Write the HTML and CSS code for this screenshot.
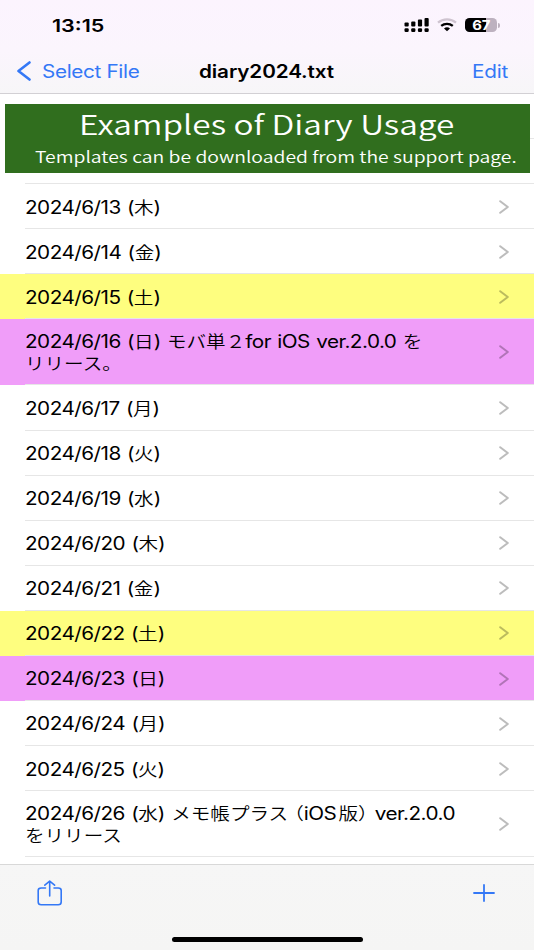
FILE: index.html
```
<!DOCTYPE html>
<html lang="ja">
<head>
    <meta charset="UTF-8">
    <meta name="viewport" content="width=device-width, initial-scale=1.0">
    <title>diary2024.txt</title>
    <link rel="stylesheet" href="styles.css">
</head>
<body>
    <header class="header">
        <div class="status">
            <span class="wide time">13:15</span>
            <div class="status-icons">
                <svg class="signal" width="26" height="16" viewBox="0 0 26 16">
                    <rect x="0.5" y="5.5" width="4.2" height="4" rx="1"/>
                    <rect x="7.2" y="4.5" width="4.2" height="5" rx="1"/>
                    <rect x="13.9" y="2.5" width="4.2" height="7" rx="1"/>
                    <rect x="20.5" y="1" width="4.2" height="8.5" rx="1"/>
                    <rect x="0.5" y="11.3" width="4.2" height="3.6" rx="1.2"/>
                    <rect x="7.2" y="11.3" width="4.2" height="3.6" rx="1.2"/>
                    <rect x="13.9" y="11.3" width="4.2" height="3.6" rx="1.2"/>
                    <rect x="20.5" y="11.3" width="4.2" height="3.6" rx="1.2"/>
                </svg>
                <svg class="wifi" width="20" height="14" viewBox="0 0 20 14" fill="none">
                    <path d="M1 4.6C6 .3 14 .3 19 4.6" stroke="#cfc4d0" stroke-width="2.3"/>
                    <path d="M4.2 7.9C7.5 5.1 12.5 5.1 15.8 7.9" stroke="#000" stroke-width="2.3"/>
                    <path d="M7 10.4C8.7 9 11.3 9 13 10.4L10 13.2Z" fill="#000"/>
                </svg>
                <div class="battery"><span>67</span></div>
                <i class="battery-tip"></i>
            </div>
        </div>
        <nav class="nav">
            <a class="back">
                <svg width="14" height="20" viewBox="0 0 14 20" fill="none" stroke="#3478f6" stroke-width="2.6" stroke-linecap="round" stroke-linejoin="round"><path d="M12.5 1.5L1.5 10L12.5 18.5"/></svg>
                <span class="wide">Select File</span>
            </a>
            <h1 class="wide">diary2024.txt</h1>
            <a class="wide edit">Edit</a>
        </nav>
    </header>

    <main class="list">
        <div class="row"></div>
        <div class="row"></div>
        <div class="row"><p class="wide">2024/6/13 (<b>木</b>)</p><svg class="arrow" viewBox="0 0 10 14"><path d="M1.2 1.2L8.8 7L1.2 12.8"/></svg></div>
        <div class="row"><p class="wide">2024/6/14 (<b>金</b>)</p><svg class="arrow" viewBox="0 0 10 14"><path d="M1.2 1.2L8.8 7L1.2 12.8"/></svg></div>
        <div class="row sat"><p class="wide">2024/6/15 (<b>土</b>)</p><svg class="arrow" viewBox="0 0 10 14"><path d="M1.2 1.2L8.8 7L1.2 12.8"/></svg></div>
        <div class="row sun double"><p class="wide">2024/6/16 (<b>日</b>) <b>モバ単２</b>for iOS ver.2.0.0 <b>を</b><br><b>リリース。</b></p><svg class="arrow" viewBox="0 0 10 14"><path d="M1.2 1.2L8.8 7L1.2 12.8"/></svg></div>
        <div class="row"><p class="wide">2024/6/17 (<b>月</b>)</p><svg class="arrow" viewBox="0 0 10 14"><path d="M1.2 1.2L8.8 7L1.2 12.8"/></svg></div>
        <div class="row"><p class="wide">2024/6/18 (<b>火</b>)</p><svg class="arrow" viewBox="0 0 10 14"><path d="M1.2 1.2L8.8 7L1.2 12.8"/></svg></div>
        <div class="row"><p class="wide">2024/6/19 (<b>水</b>)</p><svg class="arrow" viewBox="0 0 10 14"><path d="M1.2 1.2L8.8 7L1.2 12.8"/></svg></div>
        <div class="row"><p class="wide">2024/6/20 (<b>木</b>)</p><svg class="arrow" viewBox="0 0 10 14"><path d="M1.2 1.2L8.8 7L1.2 12.8"/></svg></div>
        <div class="row"><p class="wide">2024/6/21 (<b>金</b>)</p><svg class="arrow" viewBox="0 0 10 14"><path d="M1.2 1.2L8.8 7L1.2 12.8"/></svg></div>
        <div class="row sat"><p class="wide">2024/6/22 (<b>土</b>)</p><svg class="arrow" viewBox="0 0 10 14"><path d="M1.2 1.2L8.8 7L1.2 12.8"/></svg></div>
        <div class="row sun"><p class="wide">2024/6/23 (<b>日</b>)</p><svg class="arrow" viewBox="0 0 10 14"><path d="M1.2 1.2L8.8 7L1.2 12.8"/></svg></div>
        <div class="row"><p class="wide">2024/6/24 (<b>月</b>)</p><svg class="arrow" viewBox="0 0 10 14"><path d="M1.2 1.2L8.8 7L1.2 12.8"/></svg></div>
        <div class="row"><p class="wide">2024/6/25 (<b>火</b>)</p><svg class="arrow" viewBox="0 0 10 14"><path d="M1.2 1.2L8.8 7L1.2 12.8"/></svg></div>
        <div class="row double"><p class="wide">2024/6/26 (<b>水</b>) <b>メモ帳プラス<span class="open">（</span></b>iOS<b class="han">版<span class="close">）</span></b>ver.2.0.0<br><b>をリリース</b></p><svg class="arrow" viewBox="0 0 10 14"><path d="M1.2 1.2L8.8 7L1.2 12.8"/></svg></div>

        <div class="banner">
            <h2 class="wide">Examples of Diary Usage</h2>
            <p class="wide">Templates can be downloaded from the support page.</p>
        </div>
    </main>

    <footer class="toolbar">
        <svg width="26" height="26" viewBox="0 0 26 26" fill="none" stroke="#3478f6" stroke-width="1.6" stroke-linecap="round" stroke-linejoin="round">
            <path d="M8.5 8H4.2C2.2 8 1.2 8.8 1.2 10.5V22C1.2 23.8 2.2 24.7 4.2 24.7H21.2C23.2 24.7 24.2 23.8 24.2 22V10.5C24.2 8.8 23.2 8 21.2 8H17"/>
            <path d="M12.7 16V1.5M7.8 5.2L12.7 1.2L17.6 5.2"/>
        </svg>
        <svg width="22" height="18" viewBox="0 0 22 18" stroke="#3478f6" stroke-width="1.8" stroke-linecap="round"><path d="M1 9H21M11 .9V17.1"/></svg>
        <div class="home"></div>
    </footer>
</body>
</html>
```
FILE: styles.css
```
* {
    box-sizing: border-box;
    margin: 0;
    padding: 0;
}
body {
    display: flex;
    flex-direction: column;
    width: 534px;
    height: 950px;
    overflow: hidden;
    background-color: white;
    color: black;
    font-family: Inter, "Noto Sans CJK JP", sans-serif;
    font-size: 18px;
}
.wide {
    display: inline-block;
    white-space: nowrap;
    transform: scaleX(1.15);
    transform-origin: left center;
}
.header {
    flex: none;
    height: 94px;
    background: linear-gradient(#fcf4fe 0%, #fbf5fd 55%, #f7f6f8 100%);
    border-bottom: 1px solid #d2d0d4;
}
.status {
    display: flex;
    justify-content: space-between;
    height: 49px;
    padding: 15px 34px 0 52px;
}
.time {
    font-size: 17.5px;
    font-weight: 600;
    line-height: 21px;
    transform: scaleX(1.23);
}
.status-icons {
    display: flex;
    align-items: center;
    height: 20px;
}
.wifi {
    margin-left: 7px;
}
.battery {
    width: 32px;
    height: 14.5px;
    margin-left: 8px;
    border-radius: 4.5px;
    background: linear-gradient(to right, black 67%, #bdb1bf 67%);
    color: white;
    font-size: 13.5px;
    font-weight: 700;
    line-height: 14.5px;
    text-align: center;
}
.battery span {
    display: inline-block;
    transform: scaleX(1.1);
}
.battery-tip {
    width: 2px;
    height: 5px;
    margin-left: 1px;
    border-radius: 0 2px 2px 0;
    background-color: #bdb1bf;
}
.nav {
    display: grid;
    grid-template-columns: 182px 273px 1fr;
    align-items: center;
    height: 44px;
    padding-left: 17px;
}
.nav h1 {
    justify-self: start;
    font-size: 18px;
    font-weight: 600;
    letter-spacing: -0.1px;
}
.back {
    display: flex;
    align-items: center;
    gap: 11px;
    color: #3478f6;
    letter-spacing: -0.3px;
}
.edit {
    justify-self: start;
    color: #3478f6;
    letter-spacing: -0.2px;
}
.list {
    position: relative;
    flex: none;
    height: 770px;
    overflow: hidden;
}
.row {
    display: flex;
    justify-content: space-between;
    align-items: center;
    height: 45.1px;
    padding: 0 25px 0 25px;
    background: linear-gradient(#e6e6e6, #e6e6e6) 25px 100% / 100% 1px no-repeat;
    line-height: 22.4px;
}
.row p {
    padding-top: 2px;
    font-weight: 400;
    letter-spacing: -0.45px;
    word-spacing: 0.9px;
}
.row.double {
    height: 66px;
}
.row b {
    font-family: "Noto Sans CJK JP", sans-serif;
    font-size: 17px;
    font-weight: 350;
    letter-spacing: 0;
    line-height: 1;
}
.row .open {
    padding-left: 5px;
    font-feature-settings: "halt";
}
.row .han {
    padding-left: 2px;
}
.row .close {
    padding-right: 6px;
    font-feature-settings: "halt";
}
.row.sat {
    background-color: #fefe7f;
}
.row.sun {
    background-color: #f09df9;
}
.arrow {
    width: 10px;
    height: 14px;
    fill: none;
    stroke: black;
    stroke-width: 2;
    stroke-linecap: round;
    stroke-linejoin: round;
    opacity: 0.26;
}
.banner {
    position: absolute;
    top: 10px;
    left: 4.5px;
    width: 525px;
    height: 69px;
    background-color: #306e1e;
    color: white;
    font-family: "Noto Sans CJK JP", sans-serif;
    font-weight: 350;
}
.banner h2 {
    display: block;
    margin: 2px 0 0 74px;
    font-size: 27px;
    font-weight: 350;
    line-height: 36px;
    transform: scaleX(1.235);
}
.banner p {
    display: block;
    margin-left: 30.5px;
    font-size: 16px;
    line-height: 28px;
    transform: scaleX(1.21);
}
.toolbar {
    position: relative;
    flex: 1;
    display: flex;
    justify-content: space-between;
    align-items: flex-start;
    padding: 15px 39px 0 37px;
    background: linear-gradient(#f6f6f6, #f5f5f4);
    border-top: 1px solid #d8d8d8;
}
.toolbar svg:nth-child(2) {
    margin-top: 4px;
}
.home {
    position: absolute;
    left: 172px;
    bottom: 8px;
    width: 191px;
    height: 5.5px;
    border-radius: 3px;
    background-color: black;
}
```
